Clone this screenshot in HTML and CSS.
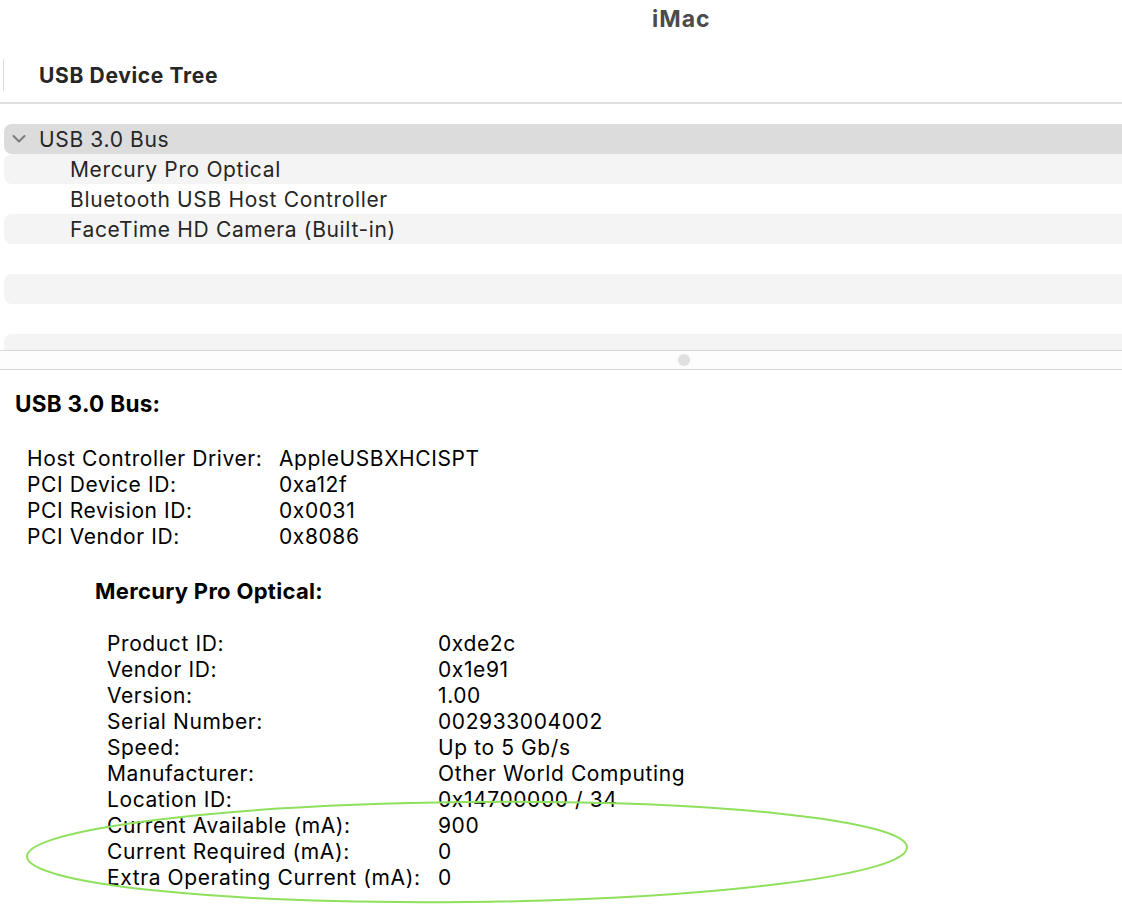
FILE: index.html
```html
<!DOCTYPE html>
<html>
<head>
<meta charset="utf-8">
<link rel="stylesheet" href="styles.css">
</head>
<body>
<div class="window">
  <div class="titlebar"><span class="title">iMac</span></div>
  <div class="tree-header">
    <span class="col-sep"></span>
    <span class="col-title">USB Device Tree</span>
  </div>
  <div class="tree-list">
    <div class="row selected"><svg class="chev" viewBox="0 0 14 10" width="14" height="10"><path d="M1.5 2 L7 7.5 L12.5 2" fill="none" stroke="#7a7a7a" stroke-width="2" stroke-linecap="round" stroke-linejoin="round"/></svg><span class="lvl0">USB 3.0 Bus</span></div>
    <div class="row alt"><span class="lvl1">Mercury Pro Optical</span></div>
    <div class="row"><span class="lvl1">Bluetooth USB Host Controller</span></div>
    <div class="row alt"><span class="lvl1">FaceTime HD Camera (Built-in)</span></div>
    <div class="row"></div>
    <div class="row alt"></div>
    <div class="row"></div>
    <div class="row alt"></div>
  </div>
  <div class="splitter"><span class="grip"></span></div>
  <div class="detail">
    <div class="h1">USB 3.0 Bus:</div>
    <div class="kv kv-top">
      <span>Host Controller Driver:</span><span>AppleUSBXHCISPT</span>
      <span>PCI Device ID:</span><span>0xa12f</span>
      <span>PCI Revision ID:</span><span>0x0031</span>
      <span>PCI Vendor ID:</span><span>0x8086</span>
    </div>
    <div class="h2">Mercury Pro Optical:</div>
    <div class="kv kv-sub">
      <span>Product ID:</span><span>0xde2c</span>
      <span>Vendor ID:</span><span>0x1e91</span>
      <span>Version:</span><span>1.00</span>
      <span>Serial Number:</span><span>002933004002</span>
      <span>Speed:</span><span>Up to 5 Gb/s</span>
      <span>Manufacturer:</span><span>Other World Computing</span>
      <span>Location ID:</span><span>0x14700000 / 34</span>
      <span>Current Available (mA):</span><span>900</span>
      <span>Current Required (mA):</span><span>0</span>
      <span>Extra Operating Current (mA):</span><span>0</span>
    </div>
  </div>
  <svg class="annot" width="1122" height="914" viewBox="0 0 1122 914">
    <ellipse cx="467" cy="852" rx="440" ry="50" transform="rotate(-0.6 467 852)" fill="none" stroke="#8fe05c" stroke-width="2"/>
  </svg>
</div>
</body>
</html>
```
FILE: styles.css
```css
html, body {
  margin: 0;
  padding: 0;
  background: #ffffff;
}
body {
  width: 1122px;
  height: 914px;
  overflow: hidden;
  font-family: Inter, "Liberation Sans", Arial, sans-serif;
}
.window {
  position: relative;
  width: 1122px;
  height: 914px;
  overflow: hidden;
}
.titlebar {
  height: 38px;
  display: flex;
  align-items: center;
  padding-left: 652px;
}
.title {
  font-weight: 700;
  font-size: 23px;
  letter-spacing: 1px;
  color: #4b4b4b;
}
.tree-header {
  height: 54px;
  padding-top: 10px;
  display: flex;
  align-items: center;
  border-bottom: 2px solid #e0e0e0;
}
.col-sep {
  width: 1px;
  height: 32px;
  background: #dcdcdc;
  margin-left: 3px;
  margin-right: 35px;
}
.col-title {
  font-weight: 700;
  font-size: 21px;
  letter-spacing: 0.65px;
  color: #262626;
}
.tree-list {
  height: 226px;
  padding-top: 20px;
  overflow: hidden;
}
.row {
  height: 30px;
  margin-left: 4px;
  margin-right: -20px;
  border-radius: 8px;
  display: flex;
  align-items: center;
  font-size: 21px;
  letter-spacing: 0.65px;
  color: #262626;
}
.row.alt {
  background: #f4f4f4;
}
.row.selected {
  background: #dcdcdc;
}
.chev {
  margin-left: 8px;
  margin-right: 13px;
}
.lvl1 {
  padding-left: 66px;
}
.splitter {
  height: 18px;
  border-top: 1px solid #d6d6d6;
  border-bottom: 1px solid #d6d6d6;
  background: #fdfdfd;
  display: flex;
  align-items: center;
  padding-left: 678px;
}
.grip {
  width: 12px;
  height: 12px;
  border-radius: 50%;
  background: #e0e0e0;
}
.detail {
  padding-top: 21px;
  color: #000;
  font-size: 21px;
  letter-spacing: 0.6px;
  line-height: 26px;
}
.h1 {
  font-weight: 700;
  font-size: 22.5px;
  letter-spacing: 0.3px;
  padding-left: 15px;
}
.kv {
  display: grid;
}
.kv-top {
  margin-top: 29px;
  padding-left: 27px;
  grid-template-columns: 252px auto;
}
.h2 {
  margin-top: 28px;
  font-weight: 700;
  font-size: 22px;
  letter-spacing: 0.3px;
  padding-left: 95px;
}
.kv-sub {
  margin-top: 27px;
  padding-left: 107px;
  grid-template-columns: 331px auto;
}
.annot {
  position: absolute;
  left: 0;
  top: 0;
  pointer-events: none;
}
```
